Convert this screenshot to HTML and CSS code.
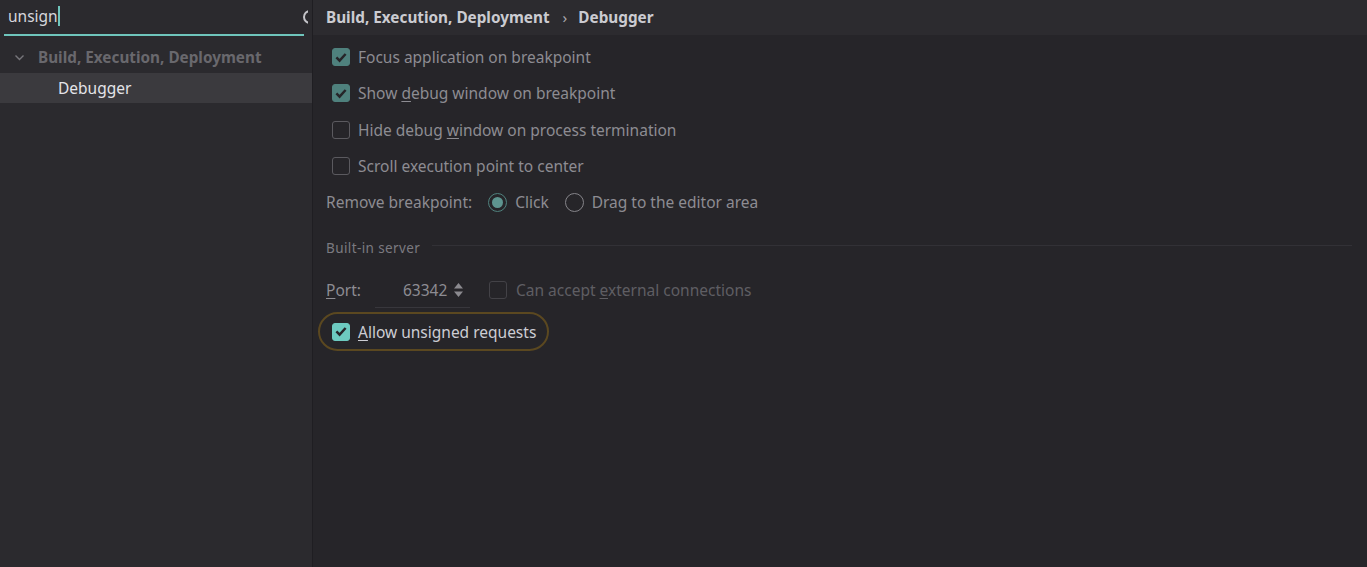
FILE: index.html
```html
<!DOCTYPE html>
<html>
<head>
<meta charset="utf-8">
<link rel="stylesheet" href="styles.css">
</head>
<body>
<div class="app">
  <aside class="sidebar">
    <div class="search">
      <span class="query">unsign</span><span class="caret"></span>
      <span class="search-icon"></span>
    </div>
    <div class="tree">
      <div class="tree-row group">
        <svg class="chev" width="11" height="11" viewBox="0 0 11 11"><path d="M1.5 3.5 L5.5 7.5 L9.5 3.5" fill="none" stroke="#77767b" stroke-width="1.4"/></svg>
        <span>Build, Execution, Deployment</span>
      </div>
      <div class="tree-row item selected"><span>Debugger</span></div>
    </div>
  </aside>
  <main class="main">
    <header class="header">
      <span>Build, Execution, Deployment</span>
      <span class="sep">›</span>
      <span>Debugger</span>
    </header>
    <section class="content">
      <div class="row">
        <span class="cb checked"><svg width="17" height="17" viewBox="0 0 17 17"><path d="M3.6 8.4 L7 11.8 L13.4 4.8" fill="none" stroke="#262529" stroke-width="2.6"/></svg></span>
        <span class="label">Focus application on breakpoint</span>
      </div>
      <div class="row">
        <span class="cb checked"><svg width="17" height="17" viewBox="0 0 17 17"><path d="M3.6 8.4 L7 11.8 L13.4 4.8" fill="none" stroke="#262529" stroke-width="2.6"/></svg></span>
        <span class="label">Show <u>d</u>ebug window on breakpoint</span>
      </div>
      <div class="row">
        <span class="cb"></span>
        <span class="label">Hide debug <u>w</u>indow on process termination</span>
      </div>
      <div class="row">
        <span class="cb"></span>
        <span class="label">Scroll execution point to center</span>
      </div>
      <div class="row radios">
        <span class="label">Remove breakpoint:</span>
        <span class="radio on"></span><span class="label">Click</span>
        <span class="radio off"></span><span class="label">Drag to the editor area</span>
      </div>
      <div class="section-title">
        <span>Built-in server</span><span class="rule"></span>
      </div>
      <div class="row port-row">
        <span class="label port-label"><u>P</u>ort:</span>
        <span class="port-field">
          <span class="port-value">63342</span>
          <svg class="spin" width="11" height="16" viewBox="0 0 11 16"><path d="M5.5 1 L10 6.5 L1 6.5 Z" fill="#8b8a8f"/><path d="M1 9.5 L10 9.5 L5.5 15 Z" fill="#8b8a8f"/></svg>
        </span>
        <span class="cb disabled"></span>
        <span class="label dim">Can accept <u>e</u>xternal connections</span>
      </div>
      <div class="highlight-wrap">
        <div class="highlight">
          <span class="cb bright"><svg width="17" height="17" viewBox="0 0 17 17"><path d="M3.6 8.4 L7 11.8 L13.4 4.8" fill="none" stroke="#262529" stroke-width="2.6"/></svg></span>
          <span class="label bright-label"><u>A</u>llow unsigned requests</span>
        </div>
      </div>
    </section>
  </main>
</div>
</body>
</html>
```

FILE: styles.css
```css
* { box-sizing: border-box; }
html, body { margin: 0; padding: 0; }
body {
  background: #262529;
  font-family: "Noto Sans", "Open Sans", sans-serif;
  font-size: 15.5px;
  color: #8d8c92;
}
u { text-decoration: underline; text-underline-offset: 2px; }
.app { display: flex; height: 567px; overflow: hidden; }

.sidebar {
  width: 313px;
  flex: none;
  background: #2b2a2e;
  border-right: 1px solid #1f1e22;
  overflow: hidden;
}
.search {
  position: relative;
  height: 36px;
  margin: 0 8px 0 4px;
  border-bottom: 2px solid #6fc5bc;
  display: flex;
  align-items: center;
  padding: 0 0 3px 4px;
}
.query { color: #d6d6dc; font-size: 15.5px; }
.caret { width: 2px; height: 20px; background: #6fc5bc; }
.search-icon {
  position: absolute;
  right: -13px;
  top: 10px;
  width: 14px;
  height: 14px;
  border-radius: 50%;
  background: #c4c4c9;
  clip-path: inset(0 9px 0 0);
}
.search-icon::after {
  content: "";
  position: absolute;
  left: 2px; top: 2px; width: 10px; height: 10px;
  border-radius: 50%;
  background: #2b2a2e;
}
.tree { padding-top: 5px; }
.tree-row { height: 30px; display: flex; align-items: center; }
.group { height: 32px; padding-left: 14px; gap: 13px; color: #69686d; font-weight: 700; font-size: 15.3px; }
.item { padding-left: 58px; color: #e4e4e9; font-size: 15.5px; }
.selected { background: #3b3a3e; }

.main { flex: 1; display: flex; flex-direction: column; }
.header {
  height: 35px;
  background: #2c2b2f;
  display: flex;
  align-items: center;
  padding: 0 0 2px 13px;
  color: #cbcbd1;
  font-weight: 700;
  font-size: 15.3px;
}
.header .sep { font-weight: 400; margin: 0 11px 0 13px; color: #a8a7ad; }

.content { padding: 4px 0 0 13px; }
.row { height: 36.3px; display: flex; align-items: center; gap: 8px; }
.cb {
  width: 18px; height: 18px;
  border: 1px solid #5b5a5f;
  border-radius: 3px;
  margin-left: 6px;
  flex: none;
  display: flex; align-items: center; justify-content: center;
}
.cb.checked { background: #4f817d; border-color: #4f817d; }
.cb.disabled { border-color: #434247; margin-left: 0; }
.cb.bright { background: #6dcac0; border-color: #6dcac0; margin-left: 0; }
.label { white-space: nowrap; }
.dim { color: #5f5e63; }

.radios { gap: 0; }
.radios .label:first-child { margin-right: 16px; }
.radio {
  width: 19px; height: 19px; border-radius: 50%;
  border: 1.5px solid #858489;
  margin-right: 8px;
  flex: none;
  display: flex; align-items: center; justify-content: center;
}
.radio.on { border-color: #4f817d; }
.radio.on::after { content: ""; width: 11px; height: 11px; border-radius: 50%; background: #5e9590; }
.radio.off { margin-left: 16px; }

.section-title {
  margin-top: 16px;
  height: 24px;
  display: flex;
  align-items: center;
  gap: 12px;
  font-size: 13.5px;
  color: #7b7a80;
  letter-spacing: 0.4px;
  padding-right: 15px;
}
.rule { flex: 1; height: 1px; background: #323136; margin-top: -6px; }

.port-row { margin-top: 12px; height: 36px; gap: 0; }
.port-label { width: 49px; }
.port-field {
  display: flex; align-items: center; gap: 6px;
  height: 36px;
  width: 95px;
  padding-left: 28px;
  margin-right: 19px;
  border-bottom: 1px solid #38373c;
}
.port-value { color: #8d8c92; }
.port-row .dim { margin-left: 9px; }

.highlight-wrap { margin-left: -8px; margin-top: 4px; }
.highlight {
  display: inline-flex;
  align-items: center;
  gap: 8px;
  height: 39px;
  padding: 0 11px 0 12px;
  border: 2px solid #5b4820;
  border-radius: 20px;
}
.bright-label { color: #cdcdd4; }
```
